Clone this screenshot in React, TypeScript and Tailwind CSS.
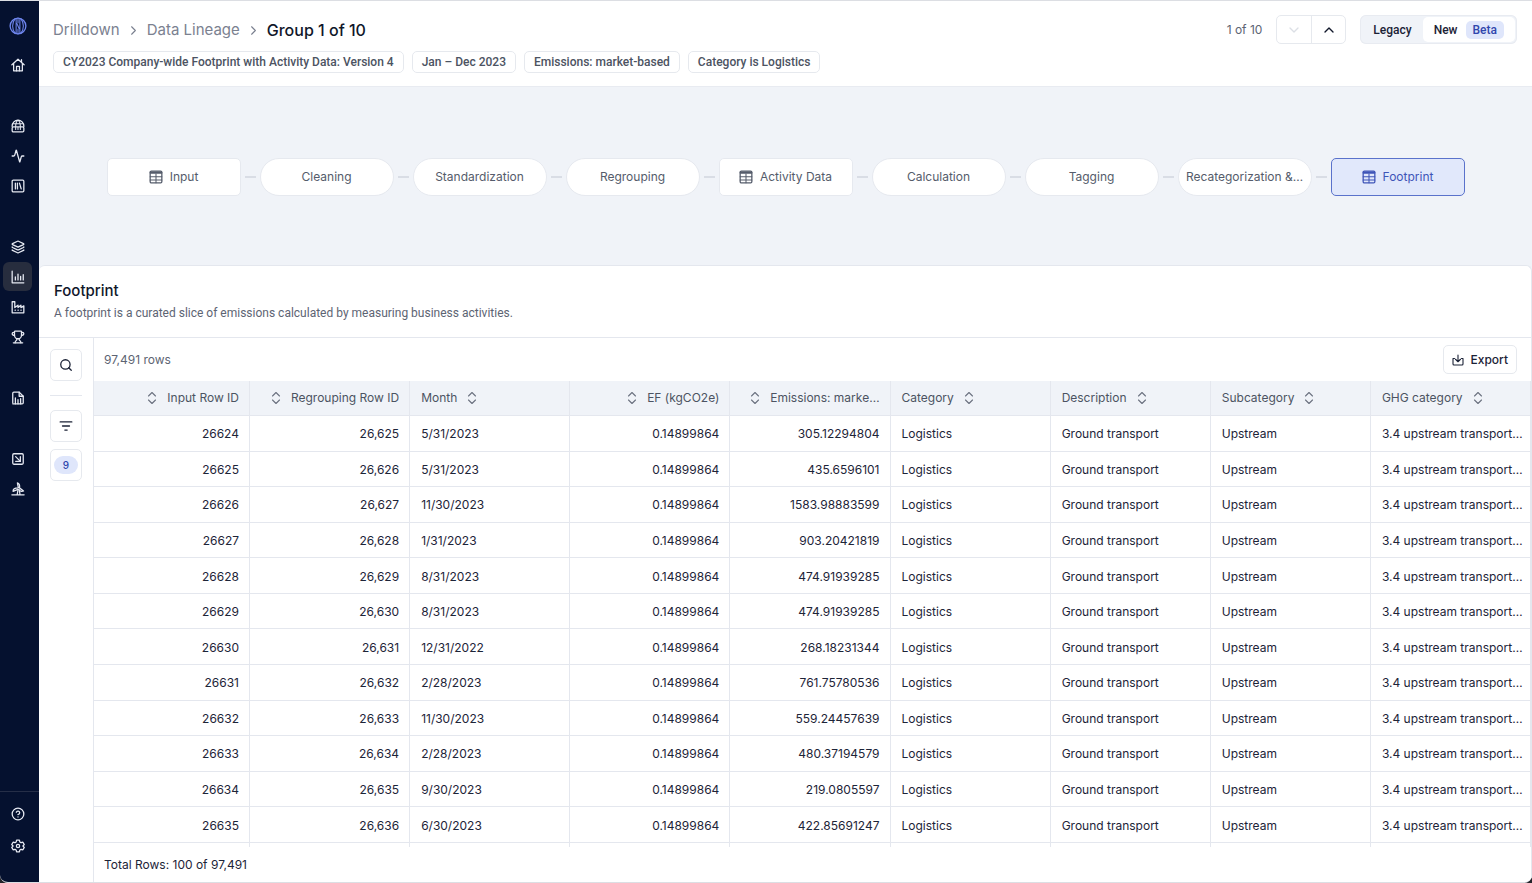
import React from "react";
import {
  Activity,
  ChevronDown,
  ChevronRight,
  ChevronUp,
  CircleHelp,
  Layers,
  Search,
  SquareArrowDownRight,
  Trophy,
} from "lucide-react";

interface IconProps {
  className?: string;
  children?: React.ReactNode;
}

const Svg: React.FC<IconProps> = ({ className = "size-3.5", children }) => (
  <svg
    viewBox="0 0 24 24"
    fill="none"
    stroke="currentColor"
    strokeWidth={2.2}
    strokeLinecap="round"
    strokeLinejoin="round"
    className={className}
    aria-hidden="true"
  >
    {children}
  </svg>
);

const Logo = () => (
  <Svg className="size-[18px] text-[#6f86ee]">
    <circle cx="12" cy="12" r="10.5" strokeWidth="1.8" />
    <path d="M8 2.500C3.800 8 3.800 16 8 21.500M9.500 2v20M9.500 8C12 8.500 12 15.500 14.500 16M14.500 2v20M16 2.500C20.200 8 20.200 16 16 21.500M12 1.500v6M12 16.500v6" strokeWidth="1.4" />
  </Svg>
);

const HomeIcon = () => (
  <Svg>
    <path d="M1.500 11.500L12 2l10.500 9.500M4.500 9v13h15V9M18 6.500V3" />
    <path d="M9.500 22v-7.500h5V22" />
  </Svg>
);

const GlobeIcon = () => (
  <Svg>
    <path d="M2 13v-1a10 10 0 0 1 20 0v1" />
    <path d="M8 13c0-5 1.200-9 4-11 2.800 2 4 6 4 11M3.500 8h17" strokeWidth="1.8" />
    <rect x="2" y="13.500" width="20" height="8.500" rx="2" />
    <path d="M8 14v4M12 14v4M16 14v4" strokeWidth="1.8" />
  </Svg>
);

const LibraryIcon = () => (
  <Svg>
    <rect x="2" y="2" width="20" height="20" rx="2" />
    <path d="M7.500 7v10M11 7v10M14.500 7l3 10" />
  </Svg>
);

const ChartIcon = () => (
  <Svg>
    <path d="M2 2v20h20M7.500 12v5M12 7v10M16.500 11v6M21 8v9" />
  </Svg>
);

const FactoryIcon = () => (
  <Svg>
    <path d="M2 22V3h4.500v10l5.500-4v4l5-4v4l5-3v12z" />
    <path d="M7 17.500h.5M12 17.500h.5M17 17.500h.5" />
  </Svg>
);

const ReportIcon = () => (
  <Svg>
    <path d="M3 20V4a2 2 0 0 1 2-2h9l7 7v11a2 2 0 0 1-2 2H3" />
    <path d="M14 2v7h7M7.500 12v10M12 15v7M16.500 13v9" />
  </Svg>
);

const TurbineIcon = () => (
  <Svg>
    <path d="M12.500 9.500L11 1.500c3 .5 4.500 4 3.500 8M15 10.500l6.500 5c-3 1.500-6.500.5-8-3M12 12.500L3.500 16c0-3.500 3.500-6 8.500-6" />
    <path d="M12 14l-1.500 8M14.500 15l1 7M1.500 22h21" />
  </Svg>
);

const GearIcon = () => (
  <Svg>
    <path d="M9.600 2h4.800l.8 3.200 2 1.200 3.200-.9 2.300 4.200-2.300 2.300 2.300 2.300-2.300 4.200-3.200-.9-2 1.200-.8 3.200H9.600l-.8-3.200-2-1.200-3.200.9-2.300-4.200L3.600 12 1.300 9.700l2.300-4.200 3.200.9 2-1.200z" />
    <circle cx="12" cy="12" r="2.800" />
  </Svg>
);

const TableIcon = () => (
  <Svg className="size-3.5 shrink-0">
    <rect x="2" y="2" width="20" height="20" rx="2" />
    <path d="M3 4.500h18" strokeWidth="4" />
    <path d="M12 7v15M2 11.500h20M2 17h20" strokeWidth="1.800" />
  </Svg>
);

const SortIcon = () => (
  <svg
    viewBox="0 0 10 14"
    fill="none"
    stroke="currentColor"
    strokeWidth={1.1}
    strokeLinecap="round"
    strokeLinejoin="round"
    className="h-3.5 w-2.5 shrink-0 text-[#6b7280]"
    aria-hidden="true"
  >
    <path d="M1.500 5L5 1.500 8.500 5M1.500 9L5 12.500 8.500 9" />
  </svg>
);

const DownloadIcon = () => (
  <Svg className="size-3">
    <path d="M12 2v13M7 10.500l5 5 5-5M5 9H2v11a2 2 0 0 0 2 2h16a2 2 0 0 0 2-2V9h-3" />
  </Svg>
);

interface NavItem {
  label: string;
  icon: React.ReactNode;
  active?: boolean;
}

const lucideProps = { className: "size-3.5", strokeWidth: 2.2 };

const navGroups: NavItem[][] = [
  [
    { label: "Organization", icon: <GlobeIcon /> },
    { label: "Activity", icon: <Activity {...lucideProps} /> },
    { label: "Library", icon: <LibraryIcon /> },
  ],
  [
    { label: "Data", icon: <Layers {...lucideProps} /> },
    { label: "Analytics", icon: <ChartIcon />, active: true },
    { label: "Facilities", icon: <FactoryIcon /> },
    { label: "Goals", icon: <Trophy {...lucideProps} /> },
  ],
  [{ label: "Reports", icon: <ReportIcon /> }],
  [
    { label: "Marketplace", icon: <SquareArrowDownRight {...lucideProps} /> },
    { label: "Energy", icon: <TurbineIcon /> },
  ],
];

const NavButton: React.FC<NavItem> = ({ label, icon, active }) => (
  <button
    aria-label={label}
    className={`flex size-[29px] items-center justify-center rounded-md text-[#e6e9f2] ${active ? "bg-[#272d3e]" : ""}`}
  >
    {icon}
  </button>
);

const Sidebar = () => (
  <nav className="flex w-[39px] shrink-0 flex-col bg-[#05112f]">
    <div className="flex flex-col gap-8 px-[3px] pt-4">
      <div className="flex flex-col gap-[15px]">
        <a href="#" aria-label="Dashboard" className="flex w-[29px] justify-center">
          <Logo />
        </a>
        <NavButton label="Home" icon={<HomeIcon />} />
      </div>
      {navGroups.map((group, i) => (
        <div key={i} className="flex flex-col gap-px">
          {group.map((item) => (
            <NavButton key={item.label} {...item} />
          ))}
        </div>
      ))}
    </div>
    <div className="mt-auto flex flex-col gap-[3px] border-t border-[#252e47] px-[3px] pt-[7px] pb-[22px]">
      <NavButton label="Help" icon={<CircleHelp {...lucideProps} />} />
      <NavButton label="Settings" icon={<GearIcon />} />
    </div>
  </nav>
);

const filters = [
  "CY2023 Company-wide Footprint with Activity Data: Version 4",
  "Jan – Dec 2023",
  "Emissions: market-based",
  "Category is Logistics",
];

const Header = () => (
  <header className="flex h-[86px] items-start justify-between border-b border-[#e8ebf1] pr-[15px] pl-3.5">
    <div className="flex flex-col gap-2.5 pt-[18px]">
      <div className="flex items-center gap-1.5 text-[15px] leading-[22px] text-[#7b8190]">
        <a href="#">Drilldown</a>
        <ChevronRight className="size-[15px]" strokeWidth={1.75} />
        <a href="#">Data Lineage</a>
        <ChevronRight className="size-[15px]" strokeWidth={1.75} />
        <h1 className="text-[16px] font-medium text-[#10172a]">Group 1 of 10</h1>
      </div>
      <div className="flex gap-2 font-['Roboto','Liberation_Sans',sans-serif]">
        {filters.map((filter) => (
          <span
            key={filter}
            className="rounded-[5px] border border-[#e6e9ee] px-[9px] text-[12px] leading-5 font-medium text-[#4c5362]"
          >
            {filter}
          </span>
        ))}
      </div>
    </div>
    <div className="flex items-center pt-3.5">
      <span className="mr-3.5 text-[12px] text-[#5d6473]">1 of 10</span>
      <div className="mr-3.5 flex h-[29px] w-[70px] divide-x divide-[#e6e9ee] rounded-[5px] border border-[#e6e9ee]">
        <button aria-label="Next group" disabled className="flex flex-1 items-center justify-center text-[#dcdfe5]">
          <ChevronDown className="size-4" />
        </button>
        <button aria-label="Previous group" className="flex flex-1 items-center justify-center text-[#10172a]">
          <ChevronUp className="size-4" />
        </button>
      </div>
      <div className="flex h-[29px] rounded-md bg-[#f0f3f8] p-0.5 font-['Roboto','Liberation_Sans',sans-serif] text-[12px] font-medium text-[#1b2236] ring-1 ring-[#e8ebf1] ring-inset">
        <button className="px-[11px]">Legacy</button>
        <button className="flex items-center gap-2 rounded-[5px] bg-white px-[11px]">
          New
          <span className="rounded-[5px] bg-[#dfe6fb] px-[7px] leading-[18px] text-[#3046ad]">Beta</span>
        </button>
      </div>
    </div>
  </header>
);

interface StepProps {
  name: string;
  kind: "table" | "process" | "selected";
}

const steps: StepProps[] = [
  { name: "Input", kind: "table" },
  { name: "Cleaning", kind: "process" },
  { name: "Standardization", kind: "process" },
  { name: "Regrouping", kind: "process" },
  { name: "Activity Data", kind: "table" },
  { name: "Calculation", kind: "process" },
  { name: "Tagging", kind: "process" },
  { name: "Recategorization &…", kind: "process" },
  { name: "Footprint", kind: "selected" },
];

const stepStyles = {
  table: "rounded-[5px] border-[#e6e9ef] bg-white text-[#555c6b]",
  process: "rounded-full border-[#e6e9ef] bg-white text-[#555c6b]",
  selected: "rounded-[5px] border-[#5a72cb] bg-[#e1e8fb] text-[#3f55b8]",
};

const Lineage = () => (
  <section className="flex h-[178px] items-center justify-center bg-[#f0f3f8] pt-0.5">
    {steps.map(({ name, kind }, i) => (
      <React.Fragment key={name}>
        {i > 0 && <span className="mx-1 h-0.5 w-[11px] bg-[#d9dde5]" />}
        <button
          className={`flex h-[38px] w-[134px] items-center justify-center gap-[7px] border text-[12px] whitespace-nowrap ${stepStyles[kind]}`}
        >
          {kind !== "process" && <TableIcon />}
          {name}
        </button>
      </React.Fragment>
    ))}
  </section>
);

const columns = [
  { name: "Input Row ID", numeric: true },
  { name: "Regrouping Row ID", numeric: true },
  { name: "Month", numeric: false },
  { name: "EF (kgCO2e)", numeric: true },
  { name: "Emissions: marke…", numeric: true },
  { name: "Category", numeric: false },
  { name: "Description", numeric: false },
  { name: "Subcategory", numeric: false },
  { name: "GHG category", numeric: false },
];

const records = [
  ["26624", "26,625", "5/31/2023", "305.12294804"],
  ["26625", "26,626", "5/31/2023", "435.6596101"],
  ["26626", "26,627", "11/30/2023", "1583.98883599"],
  ["26627", "26,628", "1/31/2023", "903.20421819"],
  ["26628", "26,629", "8/31/2023", "474.91939285"],
  ["26629", "26,630", "8/31/2023", "474.91939285"],
  ["26630", "26,631", "12/31/2022", "268.18231344"],
  ["26631", "26,632", "2/28/2023", "761.75780536"],
  ["26632", "26,633", "11/30/2023", "559.24457639"],
  ["26633", "26,634", "2/28/2023", "480.37194579"],
  ["26634", "26,635", "9/30/2023", "219.0805597"],
  ["26635", "26,636", "6/30/2023", "422.85691247"],
];

const rows = records.map(([id, regroupId, month, emissions]) => [
  id,
  regroupId,
  month,
  "0.14899864",
  emissions,
  "Logistics",
  "Ground transport",
  "Upstream",
  "3.4 upstream transport…",
]);

const FootprintTable = () => (
  <table className="h-[466px] w-full table-fixed border-separate border-spacing-0 text-[12px] text-[#1d2438]">
    <thead>
      <tr className="h-[35px] bg-[#f0f3f8] text-[#4c5362]">
        {columns.map(({ name, numeric }, i) => (
          <th
            key={name}
            className={`border-r border-b border-[#e4e7ee] pr-2.5 pl-[11px] font-normal whitespace-nowrap ${i === 0 ? "w-[156px]" : ""}`}
          >
            <button
              className={`flex w-full items-center gap-2.5 ${numeric ? "flex-row-reverse" : ""}`}
            >
              {name}
              <SortIcon />
            </button>
          </th>
        ))}
      </tr>
    </thead>
    <tbody>
      {rows.map((row) => (
        <tr key={row[0]}>
          {row.map((value, i) => (
            <td
              key={i}
              className={`border-r border-b border-[#e4e7ee] pt-0.5 pr-2.5 pl-[11px] whitespace-nowrap ${columns[i].numeric ? "text-right" : ""}`}
            >
              {value}
            </td>
          ))}
        </tr>
      ))}
      {/* top edge of the next row, cut off by the footer */}
      <tr aria-hidden="true" className="h-1">
        {columns.map(({ name }) => (
          <td key={name} className="h-1 border-r border-[#e4e7ee] p-0" />
        ))}
      </tr>
    </tbody>
  </table>
);

const ToolRail = () => (
  <div className="flex w-[55px] shrink-0 flex-col items-center border-r border-[#e4e7ee] pt-[11px]">
    <button aria-label="Search rows" className="flex size-8 items-center justify-center rounded-[5px] border border-[#e6e9ee] text-[#1b2236]">
      <Search className="size-3.5" strokeWidth={2.2} />
    </button>
    <hr className="my-3.5 w-8 border-[#e4e7ee]" />
    <button aria-label="Filter rows" className="mb-[7px] flex size-8 items-center justify-center rounded-[5px] border border-[#e6e9ee] text-[#1b2236]">
      <Svg>
        <path d="M2 5h20M6 12h12M10 19h4" />
      </Svg>
    </button>
    <button aria-label="9 columns" className="flex size-8 items-center justify-center rounded-[5px] border border-[#e6e9ee]">
      <span className="w-6 rounded-full bg-[#dfe6fb] text-[10px] leading-[18px] font-medium text-[#3046ad]">9</span>
    </button>
  </div>
);

export default function App() {
  return (
    <div className="min-h-screen bg-[#23242a] font-['Inter','Liberation_Sans',sans-serif]">
      <div className="flex min-h-screen overflow-hidden rounded-b-lg border-t border-b border-[#dcdee3] bg-white">
        <Sidebar />
        <main className="flex min-w-0 flex-1 flex-col">
          <Header />
          <Lineage />
          <div className="flex flex-1 flex-col bg-[#f0f3f8]">
            <section className="flex flex-1 flex-col rounded-t-md border-t border-r border-[#e4e7ee] bg-white">
              <div className="h-[72px] border-b border-[#e4e7ee] px-[15px] pt-3.5">
                <h2 className="text-[15px] leading-[22px] font-medium text-[#10172a]">Footprint</h2>
                <p className="font-['Roboto','Liberation_Sans',sans-serif] text-[12px] leading-[22px] text-[#5d6473]">
                  A footprint is a curated slice of emissions calculated by measuring business activities.
                </p>
              </div>
              <div className="flex flex-1">
                <ToolRail />
                <div className="flex min-w-0 flex-1 flex-col">
                  <div className="flex h-[43px] items-center justify-between pr-3.5 pl-2.5">
                    <span className="text-[12px] text-[#5d6473]">97,491 rows</span>
                    <button className="flex h-[29px] items-center gap-1.5 rounded-[5px] border border-[#e6e9ee] px-2 text-[12px] font-medium text-[#1b2236]">
                      <DownloadIcon />
                      Export
                    </button>
                  </div>
                  <FootprintTable />
                  <div className="flex flex-1 items-center px-2.5 text-[12px] text-[#1d2438]">
                    Total Rows: 100 of 97,491
                  </div>
                </div>
              </div>
            </section>
          </div>
        </main>
      </div>
    </div>
  );
}
